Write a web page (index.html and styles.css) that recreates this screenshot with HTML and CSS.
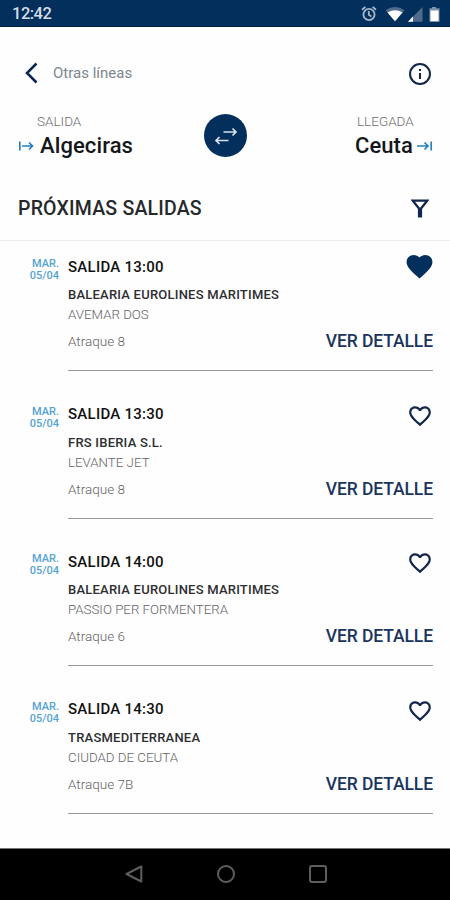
FILE: index.html
```html
<!DOCTYPE html>
<html lang="es">
<head>
<meta charset="utf-8">
<title>Próximas salidas</title>
<link rel="stylesheet" href="styles.css">
</head>
<body>
<svg class="defs" aria-hidden="true">
  <symbol id="heart" viewBox="0 0 24 24"><path d="M16.5 3c-1.74 0-3.41.81-4.5 2.09C10.91 3.81 9.24 3 7.5 3 4.42 3 2 5.42 2 8.5c0 3.78 3.4 6.86 8.55 11.54L12 21.35l1.45-1.32C18.6 15.36 22 12.28 22 8.5 22 5.42 19.58 3 16.5 3zm-4.4 15.55l-.1.1-.1-.1C7.14 14.24 4 11.39 4 8.5 4 6.5 5.5 5 7.5 5c1.54 0 3.04.99 3.57 2.36h1.87C13.46 5.99 14.96 5 16.5 5c2 0 3.5 1.5 3.5 3.5 0 2.89-3.14 5.74-7.9 10.05z"/></symbol>
  <symbol id="heart-full" viewBox="0 0 24 24"><path d="M12 21.35l-1.45-1.32C5.4 15.36 2 12.28 2 8.5 2 5.42 4.42 3 7.5 3c1.74 0 3.41.81 4.5 2.09C13.09 3.81 14.76 3 16.5 3 19.58 3 22 5.42 22 8.5c0 3.78-3.4 6.86-8.55 11.54L12 21.35z"/></symbol>
</svg>
<header class="status">
  <span class="clock">12:42</span>
  <svg class="status-icons" viewBox="0 0 82 18" width="82" height="18">
    <g fill="none" stroke="#a9b8cb" stroke-width="1.8"><circle cx="10" cy="9.5" r="5.6"/><path d="M3 4.7l3.400-2.800M17 4.700l-3.400-2.800M9.800 6v3.800l2.600 1.800"/></g>
    <path d="M26.500 5.200Q36 -1.200 45.500 5.200L36 16.200z" fill="#506b8b"/>
    <path d="M28.500 7.500Q36 3 43.500 7.500L36 16.200z" fill="#fff"/>
    <path d="M63.500 2v14.700H49z" fill="#506b8b"/>
    <path d="M54 11.600v5.100h-5z" fill="#fff"/>
    <path d="M70.500 3.300h2.500V2h4v1.300H80.500v13.400h-10z" fill="#7d91aa"/>
    <path d="M71.500 5.500h8v10.700h-8z" fill="#fff"/>
  </svg>
</header>
<main>
  <nav class="topbar">
    <svg class="back" viewBox="0 0 13 22" width="13" height="22"><path d="M11.500 1.500L2 11l9.500 9.500"/></svg>
    <span class="other">Otras líneas</span>
    <svg class="info" viewBox="0 0 24 24" width="26" height="26"><circle cx="12" cy="12" r="9.200"/><path d="M12 11v5.500M12 7.300v2"/></svg>
  </nav>
  <section class="route">
    <div class="port from">
      <span class="label">SALIDA</span>
      <div class="place"><svg class="arrow" viewBox="0 0 16 12" width="16" height="12"><path d="M1.800 1.500v9M4 6h11M11 2.500L14.500 6 11 9.500"/></svg><span class="name">Algeciras</span></div>
    </div>
    <div class="swap"><svg viewBox="0 0 24 20" width="24" height="20"><path d="M9.500 6H22M18.500 2.500L22 6l-3.500 3.500M14.500 14.500H2M5.500 11L2 14.500 5.500 18"/></svg></div>
    <div class="port to">
      <span class="label">LLEGADA</span>
      <div class="place"><span class="name">Ceuta</span><svg class="arrow" viewBox="0 0 16 12" width="16" height="12"><path d="M14.200 1.500v9M0 6h11M7.500 2.500L11 6 7.500 9.500"/></svg></div>
    </div>
  </section>
  <section class="heading">
    <h1>PRÓXIMAS SALIDAS</h1>
    <svg class="filter" viewBox="0 0 18 19" width="18" height="19"><path d="M1.800 1.700h14.400L10 9.500v8H8v-8z"/></svg>
  </section>
  <section class="list">
    <article class="trip">
      <div class="date"><span>MAR.</span><span>05/04</span></div>
      <div class="body">
        <div class="row"><h2>SALIDA 13:00</h2><svg class="heart full"><use href="#heart-full"/></svg></div>
        <div class="company">BALEARIA EUROLINES MARITIMES</div>
        <div class="ship">AVEMAR DOS</div>
        <div class="row foot"><span class="dock">Atraque 8</span><a class="detail">VER DETALLE</a></div>
      </div>
    </article>
    <article class="trip">
      <div class="date"><span>MAR.</span><span>05/04</span></div>
      <div class="body">
        <div class="row"><h2>SALIDA 13:30</h2><svg class="heart"><use href="#heart"/></svg></div>
        <div class="company">FRS IBERIA S.L.</div>
        <div class="ship">LEVANTE JET</div>
        <div class="row foot"><span class="dock">Atraque 8</span><a class="detail">VER DETALLE</a></div>
      </div>
    </article>
    <article class="trip">
      <div class="date"><span>MAR.</span><span>05/04</span></div>
      <div class="body">
        <div class="row"><h2>SALIDA 14:00</h2><svg class="heart"><use href="#heart"/></svg></div>
        <div class="company">BALEARIA EUROLINES MARITIMES</div>
        <div class="ship">PASSIO PER FORMENTERA</div>
        <div class="row foot"><span class="dock">Atraque 6</span><a class="detail">VER DETALLE</a></div>
      </div>
    </article>
    <article class="trip">
      <div class="date"><span>MAR.</span><span>05/04</span></div>
      <div class="body">
        <div class="row"><h2>SALIDA 14:30</h2><svg class="heart"><use href="#heart"/></svg></div>
        <div class="company">TRASMEDITERRANEA</div>
        <div class="ship">CIUDAD DE CEUTA</div>
        <div class="row foot"><span class="dock">Atraque 7B</span><a class="detail">VER DETALLE</a></div>
      </div>
    </article>
  </section>
</main>
<footer class="navbar">
  <svg viewBox="0 0 20 20" width="20" height="20"><path d="M17.300 2.500v15L2.500 10z"/></svg>
  <svg viewBox="0 0 20 20" width="20" height="20"><circle cx="10" cy="10" r="8"/></svg>
  <svg viewBox="0 0 20 20" width="20" height="20"><rect x="2" y="2" width="16" height="16" rx="2"/></svg>
</footer>
</body>
</html>
```
FILE: styles.css
```css
* { box-sizing: border-box; }
body {
  margin: 0;
  height: 900px;
  display: flex;
  flex-direction: column;
  overflow: hidden;
  background: #fefefe;
  font-family: Roboto, sans-serif;
  color: #15171a;
}
svg { display: block; flex: none; }
.defs { position: absolute; width: 0; height: 0; }
h1, h2 { margin: 0; }

.status {
  height: 27px;
  flex: none;
  display: flex;
  align-items: center;
  justify-content: space-between;
  padding: 1px 9px 0 12px;
  background: #032f5c;
  border-bottom: 1px solid #02214b;
}
.clock { font-size: 16.5px; letter-spacing: -.5px; color: #d5dde7; font-weight: 500; }

main { flex: 1; min-height: 0; }
.topbar {
  height: 82px;
  padding: 10px 17px 0 25px;
  display: flex;
  align-items: center;
}
.back { fill: none; stroke: #082452; stroke-width: 2.5; }
.other { margin-left: 15px; font-size: 15px; color: #7d878e; }
.info { margin-left: auto; margin-top: 1px; fill: none; stroke: #14264a; stroke-width: 1.9; }

.route {
  height: 56px;
  display: grid;
  grid-template-columns: 1fr 43px 1fr;
  align-items: start;
  padding: 0 17px 0 18px;
}
.port { display: flex; flex-direction: column; padding-top: 4px; }
.label { font-size: 13.5px; line-height: 16px; font-weight: 300; color: #6d6d70; }
.from .label { padding-left: 19px; }
.to .label { width: 58px; margin-left: auto; margin-right: 18px; }
.place { display: flex; align-items: center; height: 33px; }
.to .place { justify-content: flex-end; }
.name { font-size: 22px; font-weight: 500; letter-spacing: .1px; }
.from .name { margin-left: 6px; }
.to .name { margin-right: 4px; }
.arrow { fill: none; stroke: #267fc0; stroke-width: 1.7; }
.swap {
  width: 43px;
  height: 43px;
  margin-top: 5px;
  border-radius: 50%;
  background: #032f5c;
  display: flex;
  align-items: center;
  justify-content: center;
}
.swap svg { fill: none; stroke: #d9e2ec; stroke-width: 1.7; }

.heading {
  height: 76px;
  padding: 12px 21px 0 18px;
  display: flex;
  align-items: center;
  justify-content: space-between;
  border-bottom: 1px solid #e9eef2;
}
h1 { font-size: 19.5px; font-weight: 500; letter-spacing: .2px; color: #26282b; }
.filter { fill: none; stroke: #112650; stroke-width: 2.2; }

.list { padding: 15px 17px 0 18px; }
.trip { display: flex; height: 115.5px; margin-bottom: 32px; }
.date {
  width: 50px;
  padding: 2px 9px 0 0;
  display: flex;
  flex-direction: column;
  text-align: right;
  font-size: 11px;
  line-height: 12px;
  font-weight: 500;
  color: #55a3d3;
}
.body { flex: 1; margin-bottom: .5px; border-bottom: 1px solid #999; }
.row { display: flex; align-items: center; justify-content: space-between; height: 21px; }
h2 { font-size: 15px; font-weight: 500; letter-spacing: .25px; color: #111; }
.heart { width: 26px; height: 26px; margin-top: 3px; fill: #14264a; }
.heart.full { width: 31px; height: 31px; margin-top: 0; fill: #032f5c; margin-right: -2px; }
.company { margin-top: 8px; font-size: 13px; line-height: 20px; font-weight: 500; letter-spacing: .22px; color: #2e2e31; }
.ship { font-size: 13.3px; line-height: 19px; font-weight: 300; color: #646468; }
.foot { margin-top: 6px; height: 22px; }
.dock { font-size: 13.5px; font-weight: 300; color: #646468; }
.detail { font-size: 17.5px; font-weight: 500; letter-spacing: -.1px; color: #1a355d; }

.navbar {
  height: 52px;
  flex: none;
  padding: 0 0 2px 1px;
  background: #000;
  border-top: 1px solid #777;
  display: flex;
  align-items: center;
  justify-content: center;
  gap: 72px;
}
.navbar svg { fill: none; stroke: #5e5e5e; stroke-width: 2; stroke-linejoin: round; }
```
